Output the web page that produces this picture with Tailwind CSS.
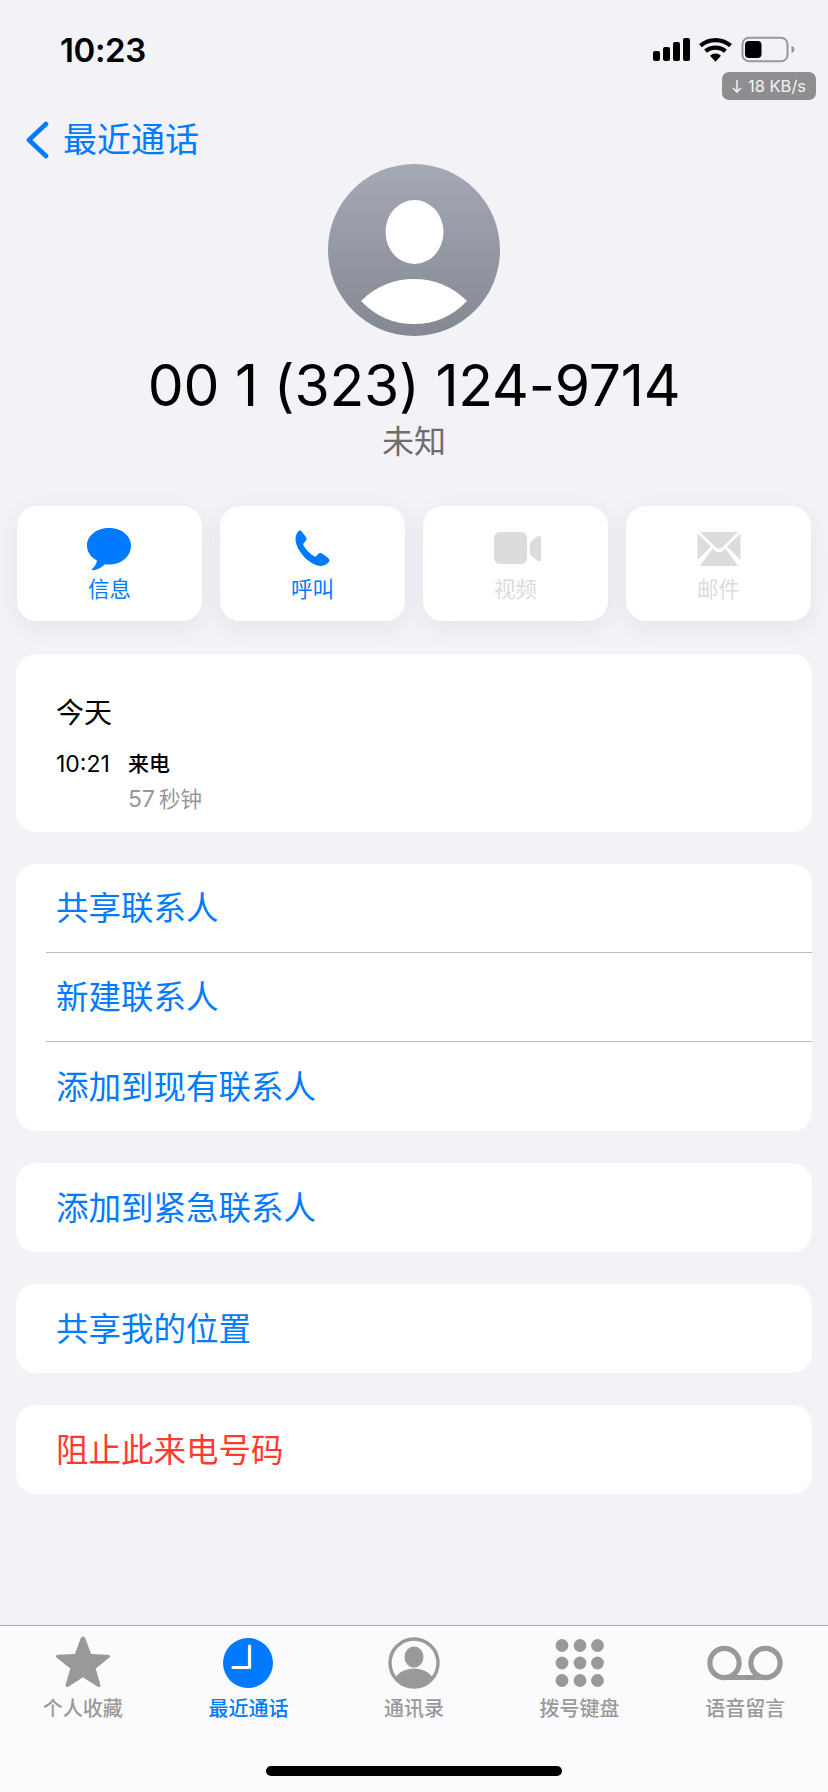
<!doctype html>
<html lang="zh">
<head>
<meta charset="utf-8">
<script src="https://cdn.jsdelivr.net/npm/@tailwindcss/browser@4"></script>
</head>
<body class="m-0">
<div class="relative w-[828px] h-[1792px] overflow-hidden flex flex-col bg-[#f2f2f7] font-['Inter','Noto_Sans_CJK_SC',sans-serif]">

  <!-- status bar -->
  <div class="h-[100px] shrink-0 flex items-start justify-between pl-[60px] pr-[31px] pt-[30px]">
    <span class="text-[33px] leading-[40px] font-semibold text-black tracking-[-0.4px]">10:23</span>
    <svg width="144" height="28" viewBox="0 0 144 28" class="mt-[6px]">
      <rect x="0" y="15" width="7" height="10" rx="2" fill="#000"/>
      <rect x="10" y="11" width="7" height="14" rx="2" fill="#000"/>
      <rect x="20" y="6" width="7" height="19" rx="2" fill="#000"/>
      <rect x="30" y="2" width="7" height="23" rx="2" fill="#000"/>
      <g transform="translate(-1.5 -0.8)">
        <g fill="none" stroke="#000" stroke-width="4.2">
          <path d="M49 10.5a23 23 0 0 1 30 0"/>
          <path d="M54 16a15.500 15.500 0 0 1 20 0"/>
        </g>
        <path d="M58.500 20.500a8 8 0 0 1 11 0L64 26.500z" fill="#000"/>
      </g>
      <rect x="89.500" y="1.700" width="45" height="23.600" rx="6.500" fill="none" stroke="#98989c" stroke-width="2"/>
      <rect x="92" y="5" width="16.500" height="17" rx="4" fill="#000"/>
      <path d="M138.500 10c2.300.6 3 2 3 3.500s-.7 2.900-3 3.500z" fill="#98989c"/>
    </svg>
  </div>
  <div class="absolute left-[722px] top-[72px] w-[94px] h-[28px] rounded-[7px] bg-[#8e8e90] flex items-center justify-center gap-[6px] text-[#f2f2f2] text-[16.5px] leading-none">
    <svg width="10" height="14" viewBox="0 0 10 14" fill="none" stroke="#f2f2f2" stroke-width="1.500"><path d="M5 1v12M1 9l4 4 4-4"/></svg>
    <span>18 KB/s</span>
  </div>

  <!-- nav -->
  <div class="h-[64px] shrink-0 flex items-center pl-[25px] pt-[16px] text-[#007aff]">
    <svg width="24" height="38" viewBox="0 0 24 38" fill="none" stroke="#007aff" stroke-width="4.600" stroke-linecap="round" stroke-linejoin="round"><path d="M21 3 4 19l17 16"/></svg>
    <span class="ml-[14px] text-[34px] leading-[40px]">最近通话</span>
  </div>

  <!-- avatar -->
  <div class="mx-auto w-[172px] h-[172px] rounded-full bg-gradient-to-b from-[#a5a9b6] to-[#848892] shrink-0 overflow-hidden">
    <svg width="172" height="172" viewBox="0 0 172 172">
      <ellipse cx="86.500" cy="68" rx="29" ry="32" fill="#fff"/>
      <path d="M33 137C48 122 66 115 86 115s38 7 53 22C124 153 106 160 86 160s-38-7-53-23z" fill="#fff"/>
    </svg>
  </div>

  <!-- title -->
  <div class="mt-[15px] h-[70px] shrink-0 text-center text-[57px] leading-[70px] text-black tracking-[-0.2px]">00 1 (323) 124-9714</div>
  <div class="h-[40px] shrink-0 mt-[1px] text-center text-[32px] leading-[40px] text-[#6d6d70]">未知</div>

  <!-- action buttons -->
  <div class="mt-[44px] px-[17px] grid grid-cols-4 gap-[18px] shrink-0">
    <div class="h-[115px] rounded-[20px] bg-white shadow-[0_6px_24px_rgba(60,60,90,0.07)] flex flex-col items-center pt-[21px] text-[#007aff]">
      <svg width="46" height="44" viewBox="0 0 46 44" class="shrink-0 -ml-[2px]"><path d="M23 1C11 1 1 8.300 1 18.500c0 6.500 4 12 10 15-.5 3-2.500 6.500-5 8.500-.6.600 0 1.300 .8 1.200 5-.5 9-2.800 12-6 1.400.2 2.800.3 4.200.3 12 0 22-7.500 22-19C45 8.300 35 1 23 1z" fill="#007aff"/></svg>
      <span class="mt-[3px] text-[21.5px] leading-[30px]">信息</span>
    </div>
    <div class="h-[115px] rounded-[20px] bg-white shadow-[0_6px_24px_rgba(60,60,90,0.07)] flex flex-col items-center pt-[21px] text-[#007aff]">
      <svg width="46" height="44" viewBox="0 0 46 44" class="shrink-0 -ml-[6px]"><path d="M14.500 4.300l4 5.300c1.300 1.700 1.400 3 .1 4.500l-1.800 2c-.7.800-.8 1.600-.1 2.700 2.500 4 6 7.700 10 10.300 1 .6 1.800.5 2.500-.2l1.700-1.700c1.500-1.400 2.800-1.500 4.500-.4l5.200 3.600c2.200 1.500 2.400 3.400.8 5.200-1.800 2-4.400 3.300-7.200 3.300-5 0-11-3.100-16.500-8.500C12.500 25 8.500 18 8.500 12c0-3 1-5.700 2.800-7.600 1.200-1.300 2.200-1.300 3.200-.1z" fill="#007aff"/></svg>
      <span class="mt-[3px] text-[21.5px] leading-[30px]">呼叫</span>
    </div>
    <div class="h-[115px] rounded-[20px] bg-white shadow-[0_6px_24px_rgba(60,60,90,0.07)] flex flex-col items-center pt-[21px] text-[#dcdcdc]">
      <svg width="50" height="44" viewBox="0 0 50 44" class="shrink-0 ml-[4px]"><rect x="1" y="5" width="33" height="32" rx="6" fill="#dcdcdc"/><path d="M37 16.500c0-.8.300-1.400.9-1.900l7-5.500c1-.8 3.100-.5 3.100 1.400v22c0 1.900-2.100 2.200-3.100 1.400l-7-5.500c-.6-.5-.9-1.100-.9-1.900z" fill="#dcdcdc"/></svg>
      <span class="mt-[3px] text-[21.5px] leading-[30px]">视频</span>
    </div>
    <div class="h-[115px] rounded-[20px] bg-white shadow-[0_6px_24px_rgba(60,60,90,0.07)] flex flex-col items-center pt-[21px] text-[#dcdcdc]">
      <svg width="44" height="44" viewBox="0 0 44 44" class="shrink-0">
        <path d="M3 5h38l-16 15.500c-1.700 1.600-4.300 1.600-6 0z" fill="#dcdcdc"/>
        <path d="M.5 6.500 14 19.500.5 33z" fill="#dcdcdc"/>
        <path d="M43.500 6.500 30 19.500 43.500 33z" fill="#dcdcdc"/>
        <path d="M3 39 15.500 21.500l2 2c2.500 2.300 6.500 2.300 9 0l2-2L41 39z" fill="#dcdcdc"/>
      </svg>
      <span class="mt-[3px] text-[21.5px] leading-[30px]">邮件</span>
    </div>
  </div>

  <!-- recent call card -->
  <div class="mt-[33px] mx-[16px] h-[178px] shrink-0 rounded-[20px] bg-white pl-[40px] pt-[37px]">
    <div class="text-[28px] leading-[44px] text-black">今天</div>
    <div class="mt-[15px] flex items-start">
      <span class="w-[72px] text-[23px] leading-[28px] text-black">10:21</span>
      <div class="flex flex-col">
        <span class="text-[21px] leading-[28px] font-medium text-black">来电</span>
        <span class="mt-[7px] text-[21.5px] leading-[28px] text-[#98989c]"><span class="text-[23px]">57</span><span class="ml-[4px]">秒钟</span></span>
      </div>
    </div>
  </div>

  <!-- contact actions -->
  <div class="mt-[32px] mx-[16px] h-[267px] shrink-0 rounded-[20px] bg-white text-[#007aff] text-[32.5px] pl-[30px] flex flex-col">
    <div class="h-[89px] flex items-center pl-[10px] pt-[3px] border-b border-[#bcbcbe]">共享联系人</div>
    <div class="h-[89px] flex items-center pl-[10px] pt-[3px] border-b border-[#bcbcbe]">新建联系人</div>
    <div class="h-[89px] flex items-center pl-[10px] pt-[3px]">添加到现有联系人</div>
  </div>

  <div class="mt-[32px] mx-[16px] h-[89px] shrink-0 rounded-[20px] bg-white text-[#007aff] text-[32.5px] pl-[40px] pt-[3px] flex items-center">添加到紧急联系人</div>
  <div class="mt-[32px] mx-[16px] h-[89px] shrink-0 rounded-[20px] bg-white text-[#007aff] text-[32.5px] pl-[40px] pt-[3px] flex items-center">共享我的位置</div>
  <div class="mt-[32px] mx-[16px] h-[89px] shrink-0 rounded-[20px] bg-white text-[#ff3b30] text-[32.5px] pl-[40px] pt-[3px] flex items-center">阻止此来电号码</div>

  <!-- tab bar -->
  <div class="mt-auto h-[167px] shrink-0 bg-[#fbfbfd] border-t border-[#b0b0b3] flex flex-col">
    <div class="grid grid-cols-5 pt-[9px] text-[20px] leading-[28px] font-medium text-[#999999]">
      <div class="flex flex-col items-center">
        <svg width="56" height="54" viewBox="0 0 56 54"><path d="M28 1.500c1.200 0 1.900.8 2.400 2l5.700 15.600 16.700.6c2.400.1 3 2 1.100 3.400L40.700 33.500l4.600 16c.6 2.200-1 3.300-2.900 2L28 42.200 13.600 51.500c-1.900 1.300-3.500.2-2.900-2l4.600-16L2.100 23.100C.2 21.700.8 19.800 3.200 19.700l16.700-.6L25.600 3.500c.5-1.200 1.200-2 2.400-2z" fill="#999999"/></svg>
        <span class="mt-[6px]">个人收藏</span>
      </div>
      <div class="flex flex-col items-center text-[#007aff]">
        <svg width="56" height="54" viewBox="0 0 56 54"><circle cx="28" cy="28" r="25" fill="#007aff"/><path d="M29.500 11v21.500H13" fill="none" stroke="#fff" stroke-width="3.200" stroke-linecap="round" stroke-linejoin="round"/></svg>
        <span class="mt-[6px]">最近通话</span>
      </div>
      <div class="flex flex-col items-center">
        <svg width="56" height="54" viewBox="0 0 56 54"><circle cx="28" cy="28" r="24" fill="none" stroke="#999999" stroke-width="3.400"/><ellipse cx="28" cy="22" rx="9.500" ry="10.500" fill="#999999"/><path d="M9 43c4-6 11-9.500 19-9.500S43 37 47 43c-4.500 5.500-11.500 8.500-19 8.500S13.500 48.500 9 43z" fill="#999999"/></svg>
        <span class="mt-[6px]">通讯录</span>
      </div>
      <div class="flex flex-col items-center">
        <svg width="56" height="54" viewBox="0 0 56 54" fill="#999999"><circle cx="10" cy="10.500" r="6.400"/><circle cx="28" cy="10.500" r="6.400"/><circle cx="45.500" cy="10.500" r="6.400"/><circle cx="10" cy="28" r="6.400"/><circle cx="28" cy="28" r="6.400"/><circle cx="45.500" cy="28" r="6.400"/><circle cx="10" cy="45.500" r="6.400"/><circle cx="28" cy="45.500" r="6.400"/><circle cx="45.500" cy="45.500" r="6.400"/></svg>
        <span class="mt-[6px]">拨号键盘</span>
      </div>
      <div class="flex flex-col items-center">
        <svg width="76" height="54" viewBox="0 0 76 54" fill="none" stroke="#999999" stroke-width="5.200"><circle cx="17.500" cy="28" r="14.600"/><circle cx="58.500" cy="28" r="14.600"/><path d="M17.500 42.500h41"/></svg>
        <span class="mt-[6px]">语音留言</span>
      </div>
    </div>
    <div class="mt-auto mb-[16px] mx-auto w-[296px] h-[10px] rounded-full bg-black"></div>
  </div>
</div>
</body>
</html>
